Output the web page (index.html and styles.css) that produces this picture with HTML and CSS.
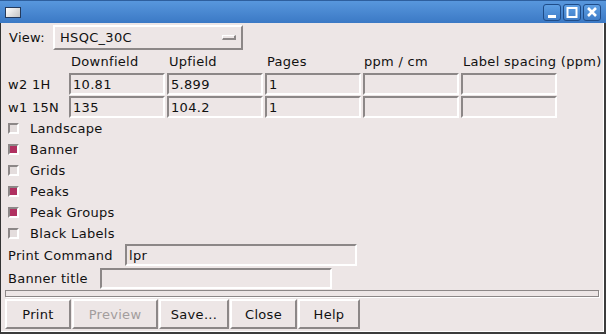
FILE: index.html
```html
<!DOCTYPE html>
<html lang="en">
<head>
  <meta charset="UTF-8">
  <title>Print</title>
  <link rel="stylesheet" href="styles.css">
</head>
<body>
  <div class="window">
    <!-- Title bar -->
    <div class="titlebar">
      <div class="app-icon"></div>
      <div class="title-buttons">
        <div class="tbtn">
          <svg width="16" height="15" viewBox="0 0 16 15"><rect x="4" y="10" width="8" height="3" fill="#fff"/></svg>
        </div>
        <div class="tbtn">
          <svg width="16" height="15" viewBox="0 0 16 15"><rect x="3.5" y="3" width="9" height="9" fill="none" stroke="#fff" stroke-width="2"/></svg>
        </div>
        <div class="tbtn">
          <svg width="16" height="15" viewBox="0 0 16 15"><path d="M4 3 L12 11 M12 3 L4 11" stroke="#fff" stroke-width="2.6"/></svg>
        </div>
      </div>
    </div>

    <div class="body">
      <div class="form">
        <div class="view-row">
          <span class="view-label">View:</span>
          <div class="menubutton">
            <span>HSQC_30C</span>
            <span class="indicator"></span>
          </div>
        </div>

        <div class="grid">
          <span></span>
          <span class="head">Downfield</span>
          <span class="head">Upfield</span>
          <span class="head">Pages</span>
          <span class="head head-tight">ppm / cm</span>
          <span class="head">Label spacing (ppm)</span>

          <span class="row-label">w2 1H</span>
          <div class="entry">10.81</div>
          <div class="entry">5.899</div>
          <div class="entry">1</div>
          <div class="entry"></div>
          <div class="entry"></div>

          <span class="row-label">w1 15N</span>
          <div class="entry">135</div>
          <div class="entry">104.2</div>
          <div class="entry">1</div>
          <div class="entry"></div>
          <div class="entry"></div>
        </div>

        <div class="checks">
          <div class="check"><span class="box"></span>Landscape</div>
          <div class="check"><span class="box on"></span>Banner</div>
          <div class="check"><span class="box"></span>Grids</div>
          <div class="check"><span class="box on"></span>Peaks</div>
          <div class="check"><span class="box on"></span>Peak Groups</div>
          <div class="check"><span class="box"></span>Black Labels</div>
        </div>

        <div class="field-row">
          <span class="cmd-label">Print Command</span>
          <div class="entry wide">lpr</div>
        </div>
        <div class="field-row short">
          <span class="banner-label">Banner title</span>
          <div class="entry wide"></div>
        </div>
      </div>

      <div class="separator"></div>

      <div class="buttons">
        <button class="b-print">Print</button>
        <button class="b-preview" disabled>Preview</button>
        <button class="b-save">Save...</button>
        <button class="b-close">Close</button>
        <button class="b-help">Help</button>
      </div>
    </div>
  </div>
</body>
</html>
```

FILE: styles.css
```css
body {
  margin: 0;
  font-family: "DejaVu Sans", sans-serif;
  font-size: 13px;
  letter-spacing: 0.3px;
  color: #111;
}

.window {
  width: 606px;
  height: 334px;
  display: flex;
  flex-direction: column;
  background-color: #ede6e6;
}

/* title bar */
.titlebar {
  height: 23px;
  flex: none;
  display: flex;
  align-items: center;
  justify-content: space-between;
  padding: 0 5px 0 5px;
  background: linear-gradient(#5897dd, #3b79c5);
  border-top: 1px solid #2e5f9e;
  box-sizing: border-box;
}

.app-icon {
  width: 16px;
  height: 11px;
  box-sizing: border-box;
  border: 1px solid #243a5c;
  background: linear-gradient(135deg, #ffffff, #c4c4c4);
}

.title-buttons {
  display: flex;
  gap: 2px;
}

.tbtn {
  width: 18px;
  height: 17px;
  box-sizing: border-box;
  border: 1px solid #1f4c88;
  border-radius: 3px;
  background: linear-gradient(#5e9fe4, #3f7dc8);
  display: flex;
  align-items: center;
  justify-content: center;
}

/* main area */
.body {
  flex: 1;
  border-left: 1px solid #333;
  border-right: 2px solid #3c3c3c;
  border-bottom: 2px solid #3c3c3c;
  padding: 2px 0 0 4px;
  box-shadow: inset -1px -1px 0 #fff;
}

.form {
  padding-left: 3px;
}

.view-row {
  display: flex;
  align-items: center;
  height: 25px;
}

.view-label {
  width: 45px;
  padding-left: 1px;
  box-sizing: border-box;
}

.menubutton {
  width: 190px;
  height: 25px;
  box-sizing: border-box;
  border: 2px solid;
  border-color: #fff #8c8787 #8c8787 #fff;
  display: flex;
  align-items: center;
  justify-content: space-between;
  padding: 0 5px 0 5px;
}

.indicator {
  width: 14px;
  height: 5px;
  box-sizing: border-box;
  border: 1px solid;
  border-color: #fff #8c8787 #8c8787 #fff;
  border-width: 1px 2px 2px 1px;
}

.grid {
  display: grid;
  grid-template-columns: 59px repeat(5, 96px);
  grid-template-rows: 22px 22px 22px;
  column-gap: 2px;
  row-gap: 1px;
}

.head {
  padding: 4px 0 0 2px;
  white-space: nowrap;
}

.head-tight {
  padding-left: 1px;
}

.row-label {
  display: flex;
  align-items: center;
  white-space: nowrap;
}

.entry {
  height: 22px;
  box-sizing: border-box;
  border: 2px solid;
  border-color: #8c8787 #fff #fff #8c8787;
  padding: 0 2px;
  display: flex;
  align-items: center;
}

.checks {
  display: flex;
  flex-direction: column;
}

.check {
  height: 21px;
  display: flex;
  align-items: center;
  gap: 11px;
}

.box {
  width: 11px;
  height: 11px;
  box-sizing: border-box;
  border: 2px solid;
  border-color: #8c8787 #fff #fff #8c8787;
  background-color: #e4dddd;
}

.box.on {
  background-color: #b03060;
}

.field-row {
  display: flex;
  align-items: center;
  height: 22px;
}

.field-row.short {
  margin-top: 2px;
  height: 21px;
}

.field-row.short .entry {
  height: 21px;
}

.cmd-label {
  width: 117px;
  white-space: nowrap;
}

.banner-label {
  width: 92px;
  white-space: nowrap;
}

.entry.wide {
  width: 232px;
}

.separator {
  height: 7px;
  width: 594px;
  box-sizing: border-box;
  border: 1px solid #8c8787;
  box-shadow: 1px 1px 0 #fff;
  margin-top: 1px;
}

.buttons {
  display: flex;
  gap: 1px;
  margin-top: 2px;
}

button {
  height: 30px;
  font-family: "DejaVu Sans", sans-serif;
  font-size: 13px;
  letter-spacing: 0.3px;
  color: #111;
  background-color: #ede6e6;
  border: 2px solid;
  border-color: #fff #8c8787 #8c8787 #fff;
  padding: 0;
}

button:disabled {
  color: #a39d9d;
}

.b-print { width: 66px; }
.b-preview { width: 86px; }
.b-save { width: 70px; }
.b-close { width: 67px; }
.b-help { width: 62px; }
```
